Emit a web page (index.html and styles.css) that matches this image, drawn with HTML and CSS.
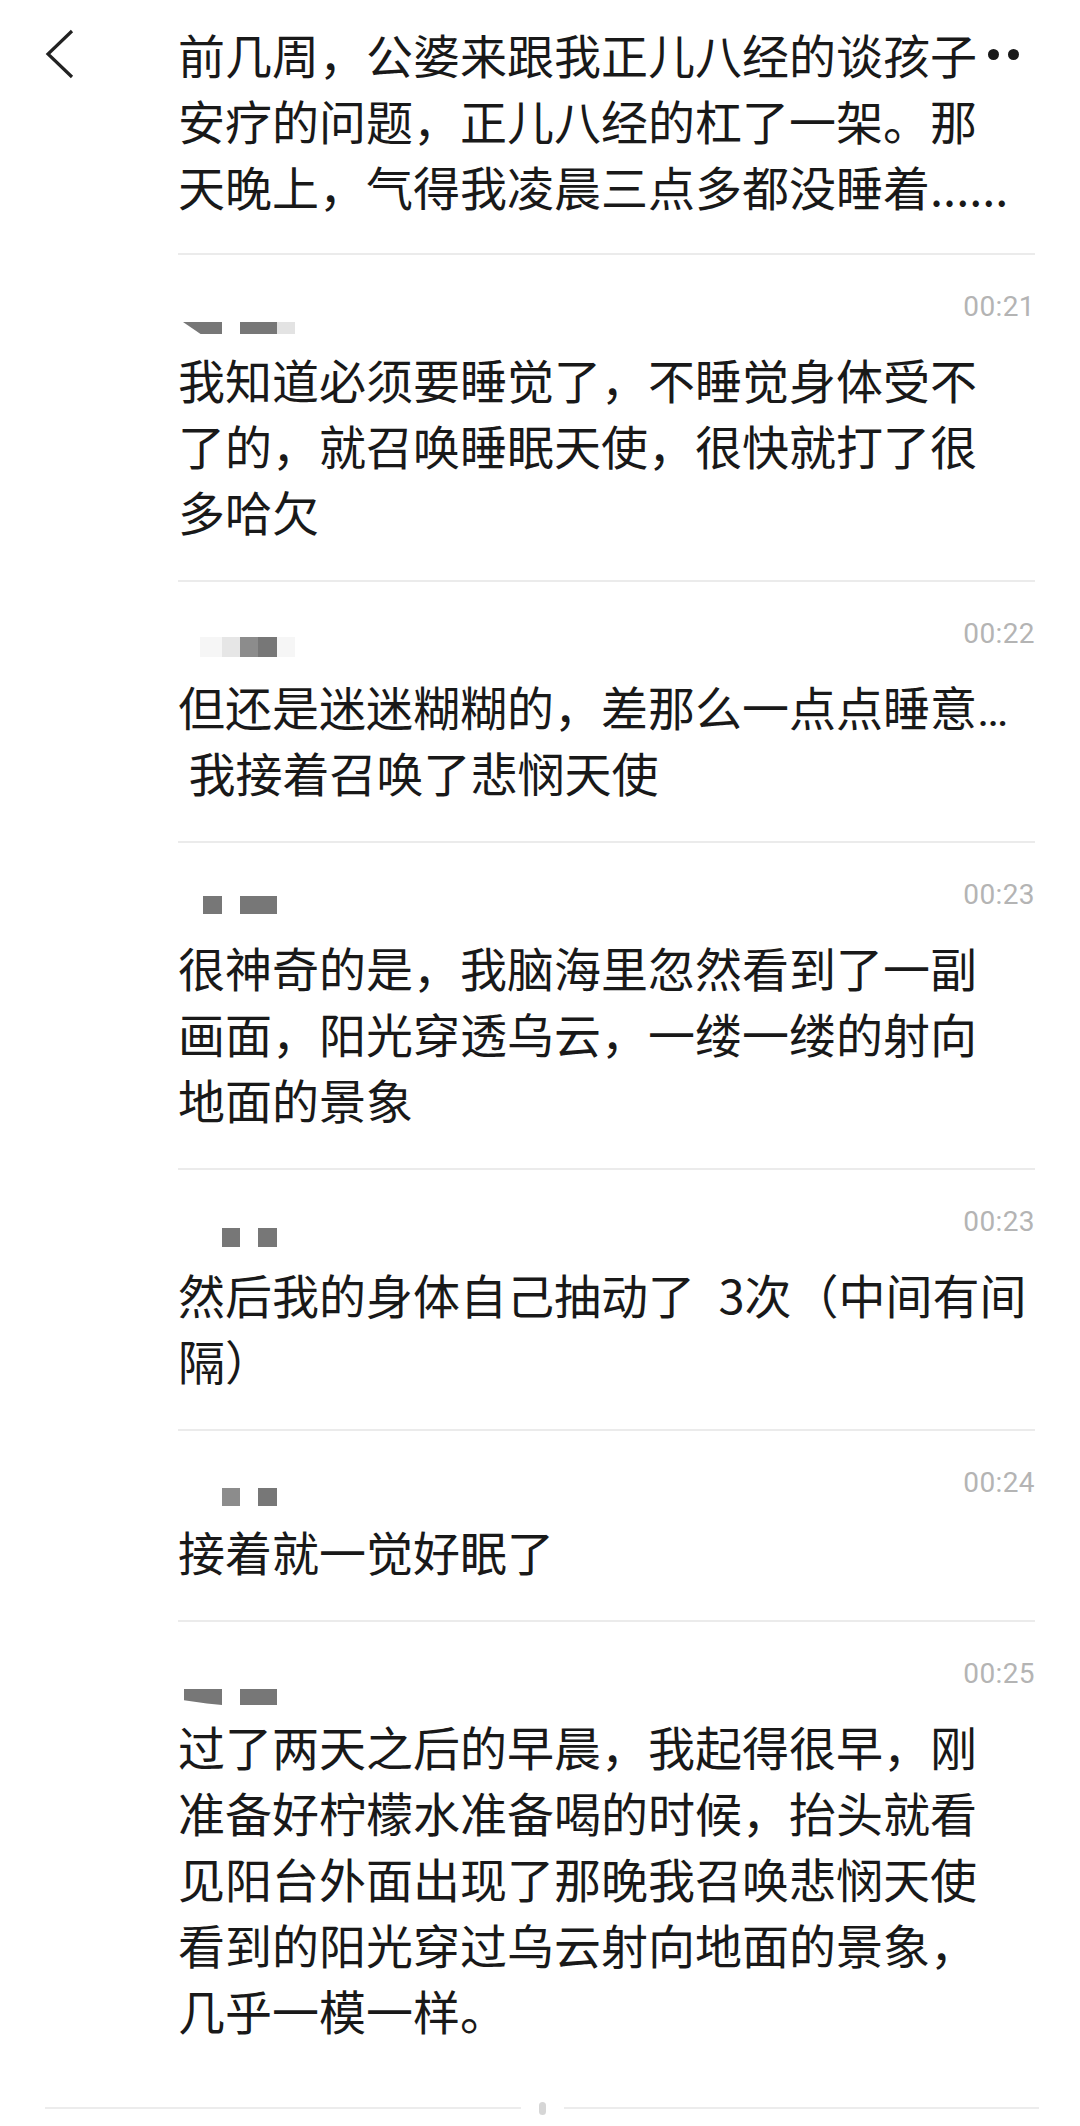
FILE: index.html
```html
<!DOCTYPE html>
<html lang="zh-CN">
<head>
<meta charset="utf-8">
<title>消息</title>
<link rel="stylesheet" href="styles.css">
</head>
<body>
<div class="screen">
  <a class="back" aria-label="返回">
    <svg width="32" height="52" viewBox="0 0 32 52"><polyline points="28,3 4,26 28,49" fill="none" stroke="#222" stroke-width="3.2" stroke-linejoin="miter"/></svg>
  </a>
  <div class="more" aria-label="更多"><span class="dot"></span><span class="dot"></span></div>

  <main class="list">
    <section class="intro">
      <p class="msg">前几周，公婆来跟我正儿八经的谈孩子<br>安疗的问题，正儿八经的杠了一架。那<br>天晚上，气得我凌晨三点多都没睡着......</p>
    </section>

    <section class="entry">
      <div class="head">
        <div class="mask m1"><span class="b dark slant"></span><span class="b dark w37"></span><span class="b light w18"></span></div>
        <time class="time">00:21</time>
      </div>
      <p class="msg">我知道必须要睡觉了，不睡觉身体受不<br>了的，就召唤睡眠天使，很快就打了很<br>多哈欠</p>
    </section>

    <section class="entry">
      <div class="head">
        <div class="mask m2"><span class="b faint w22"></span><span class="b pale w18"></span><span class="b mid w18"></span><span class="b dark w19"></span><span class="b faint w18"></span></div>
        <time class="time">00:22</time>
      </div>
      <p class="msg">但还是迷迷糊糊的，差那么一点点睡意<span class="latin">…</span><br> 我接着召唤了悲悯天使</p>
    </section>

    <section class="entry">
      <div class="head">
        <div class="mask m3"><span class="b dark w19"></span><span class="b dark w37"></span></div>
        <time class="time">00:23</time>
      </div>
      <p class="msg">很神奇的是，我脑海里忽然看到了一副<br>画面，阳光穿透乌云，一缕一缕的射向<br>地面的景象</p>
    </section>

    <section class="entry">
      <div class="head">
        <div class="mask m4"><span class="b dark w18"></span><span class="b dark w19"></span></div>
        <time class="time">00:23</time>
      </div>
      <p class="msg">然后我的身体自己抽动了&ensp;3次（中间有间<br>隔）</p>
    </section>

    <section class="entry short">
      <div class="head">
        <div class="mask m5"><span class="b mid w18"></span><span class="b dark w19"></span></div>
        <time class="time">00:24</time>
      </div>
      <p class="msg">接着就一觉好眠了</p>
    </section>

    <section class="entry last">
      <div class="head">
        <div class="mask m6"><span class="b dark slant2"></span><span class="b dark w37"></span></div>
        <time class="time">00:25</time>
      </div>
      <p class="msg">过了两天之后的早晨，我起得很早，刚<br>准备好柠檬水准备喝的时候，抬头就看<br>见阳台外面出现了那晚我召唤悲悯天使<br>看到的阳光穿过乌云射向地面的景象，<br>几乎一模一样。</p>
    </section>
  </main>

  <footer class="foot">
    <span class="rule"></span><span class="knob"></span><span class="rule"></span>
  </footer>
</div>
</body>
</html>
```

FILE: styles.css
```css
html, body {
  margin: 0;
  padding: 0;
  background: #ffffff;
}

.screen {
  position: relative;
  width: 1080px;
  height: 2126px;
  overflow: hidden;
  background: #ffffff;
  font-family: "Noto Sans CJK SC", "Noto Sans", sans-serif;
  color: #191919;
}

.back {
  position: absolute;
  left: 44px;
  top: 28px;
  display: block;
  width: 32px;
  height: 52px;
}

.back svg {
  display: block;
}

.more {
  position: absolute;
  left: 988px;
  top: 49px;
  display: flex;
  gap: 9px;
}

.more .dot {
  width: 11px;
  height: 11px;
  border-radius: 50%;
  background: #191919;
}

.list {
  padding: 21px 45px 0 178px;
}

.msg {
  margin: 0;
  font-size: 47px;
  line-height: 66px;
  white-space: pre-wrap;
  letter-spacing: 0;
}

.latin {
  font-family: Roboto, "Noto Sans", sans-serif;
  line-height: 0;
}

.intro {
  padding-bottom: 34px;
}

.entry {
  border-top: 2px solid #ebebeb;
  padding-bottom: 36px;
}

.head {
  height: 91px;
  display: flex;
  justify-content: space-between;
  align-items: flex-start;
}

.entry.short .head {
  height: 87px;
}

.time {
  margin-top: 32px;
  font-family: Roboto, "Noto Sans", sans-serif;
  font-size: 28px;
  line-height: 40px;
  color: #b4b4b4;
  letter-spacing: 0.4px;
}

.mask {
  display: flex;
}

.b {
  display: block;
  height: 100%;
}

.dark { background: #777777; }
.mid { background: #8c8c8c; }
.pale { background: #e6e6e6; }
.light { background: #e3e3e3; }
.faint { background: #f6f6f6; }

.w18 { width: 18px; }
.w19 { width: 19px; }
.w22 { width: 22px; }
.w37 { width: 37px; }

.m1 { height: 12px; margin-top: 67px; margin-left: 5px; }
.m1 .slant {
  width: 39px;
  clip-path: polygon(0 0, 100% 0, 100% 100%, 45% 100%);
}
.m1 .w37 { margin-left: 18px; }

.m2 { height: 20px; margin-top: 55px; margin-left: 22px; }

.m3 { height: 18px; margin-top: 53px; margin-left: 25px; }
.m3 .w37 { margin-left: 18px; }

.m4 { height: 19px; margin-top: 58px; margin-left: 44px; }
.m4 .w19 { margin-left: 18px; }

.m5 { height: 18px; margin-top: 57px; margin-left: 44px; }
.m5 .w19 { margin-left: 18px; }

.m6 { height: 16px; margin-top: 67px; margin-left: 6px; }
.m6 .slant2 {
  width: 38px;
  clip-path: polygon(0 0, 100% 0, 100% 100%, 60% 90%, 0 70%);
}
.m6 .w37 { margin-left: 18px; }

.foot {
  display: flex;
  align-items: center;
  margin: 22px 41px 0 45px;
  height: 14px;
}

.foot .rule {
  flex: 1;
  height: 2px;
  background: #ececec;
}

.foot .knob {
  width: 7px;
  height: 13px;
  margin: 0 18px;
  border-radius: 4px;
  background: #d6d6d6;
}
```
